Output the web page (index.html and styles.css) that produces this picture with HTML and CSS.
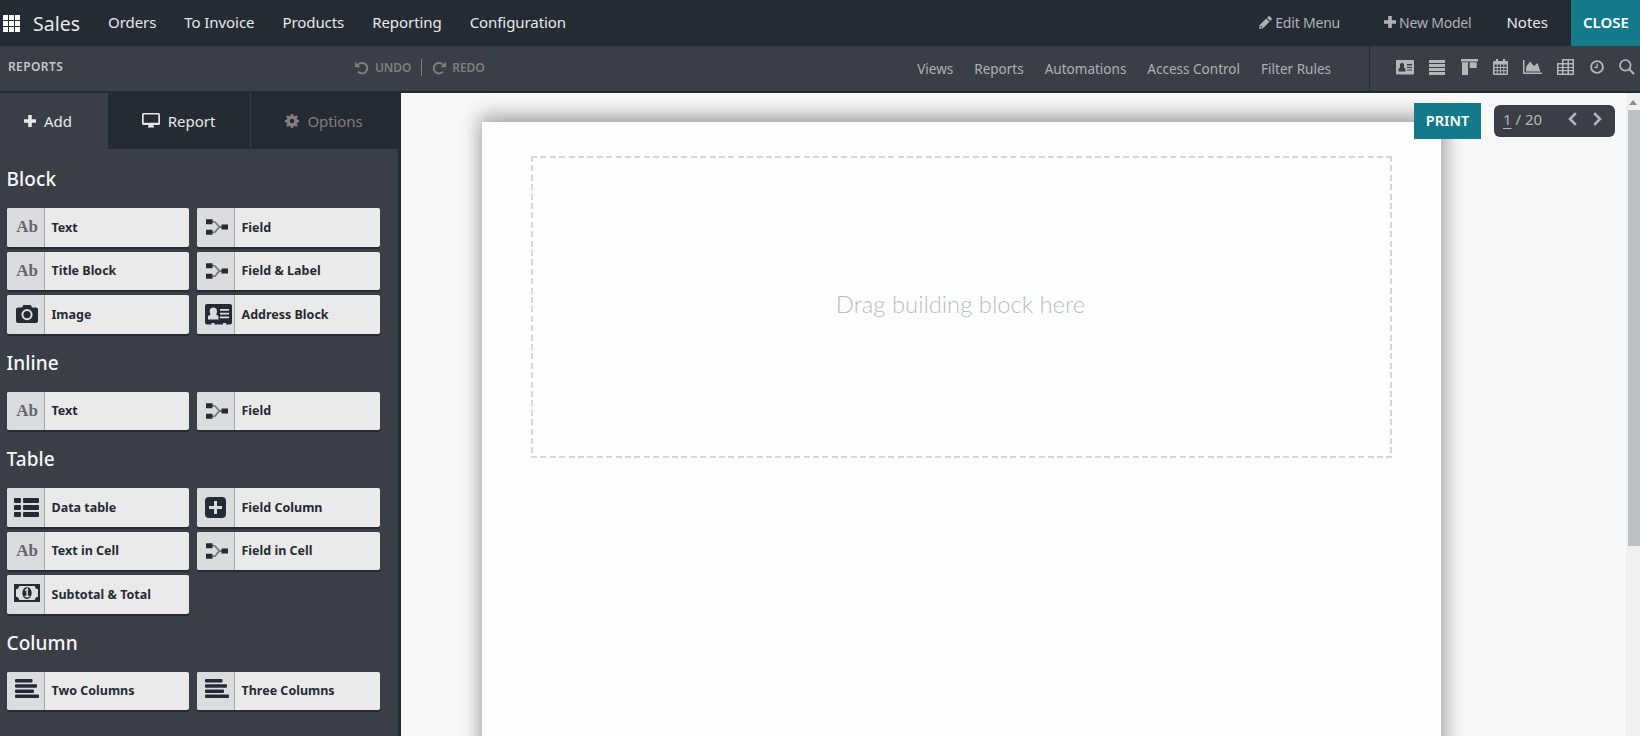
FILE: index.html
```
<!DOCTYPE html>
<html lang="en">
<head>
<meta charset="utf-8">
<title>Sales - Reports</title>
<link rel="stylesheet" href="styles.css">
</head>
<body>
<svg class="defs" width="0" height="0" aria-hidden="true">
  <symbol id="field" viewBox="0 0 22 16">
    <path d="M4 2.700h3.500C11 2.700 11 8 14.500 8H17M4 13.300h3.500C11 13.300 11 8 14.500 8" fill="none" stroke="#777b80" stroke-width="1.800"/>
    <path d="M0 .2h6.500v5H0zM0 10.800h6.500v5H0zM15.500 5.500H22v5h-6.500z"/>
  </symbol>
  <symbol id="align" viewBox="0 0 24 19">
    <path d="M1 0h15.500a1 1 0 0 1 1 1v1.500a1 1 0 0 1-1 1H1a1 1 0 0 1-1-1V1a1 1 0 0 1 1-1zM1 5.200h20a1 1 0 0 1 1 1v1.500a1 1 0 0 1-1 1H1a1 1 0 0 1-1-1v-1.500a1 1 0 0 1 1-1zM1 10.400h17a1 1 0 0 1 1 1v1.500a1 1 0 0 1-1 1H1a1 1 0 0 1-1-1v-1.500a1 1 0 0 1 1-1zM1 15.500h22a1 1 0 0 1 1 1V18a1 1 0 0 1-1 1H1a1 1 0 0 1-1-1v-1.500a1 1 0 0 1 1-1z"/>
  </symbol>
  <symbol id="undo" viewBox="0 0 14 14">
    <path d="M2.600 4.200A5.300 5.300 0 1 1 3 10.700" fill="none" stroke="currentColor" stroke-width="2"/>
    <path d="M0 .8v5.400h5.400z"/>
  </symbol>
  <symbol id="plus" viewBox="0 0 12 12">
    <path d="M4.200 0h3.600v4.200H12v3.600H7.800V12H4.200V7.800H0V4.200h4.200z"/>
  </symbol>
</svg>

<header class="topbar">
  <svg class="apps" viewBox="0 0 17 17"><path d="M0 0h5v5H0zM6 0h5v5H6zM12 0h5v5h-5zM0 6h5v5H0zM6 6h5v5H6zM12 6h5v5h-5zM0 12h5v5H0zM6 12h5v5H6zM12 12h5v5h-5z"/></svg>
  <span class="brand">Sales</span>
  <nav class="menu"><a>Orders</a><a>To Invoice</a><a>Products</a><a>Reporting</a><a>Configuration</a></nav>
  <div class="actions">
    <a class="muted edit"><svg width="13" height="13" viewBox="0 0 13 13"><path d="M9.300.500a1.200 1.200 0 0 1 1.700 0L12.500 2a1.200 1.200 0 0 1 0 1.700l-1.300 1.300L8 1.800zM7.300 2.500l3.200 3.200-6.600 6.600L0 13l.7-3.900zM1.800 9.600l-.3 1.900 1.900-.4z" fill-rule="evenodd"/></svg>Edit Menu</a>
    <a class="muted model"><svg width="12" height="12"><use href="#plus"/></svg>New Model</a>
    <a class="notes">Notes</a>
    <button class="close">CLOSE</button>
  </div>
</header>

<div class="subbar">
  <span class="crumb">REPORTS</span>
  <div class="history">
    <span><svg width="14" height="14"><use href="#undo"/></svg>UNDO</span>
    <i></i>
    <span><svg class="flip" width="14" height="14"><use href="#undo"/></svg>REDO</span>
  </div>
  <nav class="links"><a>Views</a><a>Reports</a><a>Automations</a><a>Access Control</a><a>Filter Rules</a></nav>
  <div class="views">
    <svg width="18" height="15" viewBox="0 0 18 15"><path fill-rule="evenodd" d="M1 0h16a1 1 0 0 1 1 1v12.500a1 1 0 0 1-1 1H1a1 1 0 0 1-1-1V1a1 1 0 0 1 1-1zM2.500 11.500h7V9L8 7.500V4L6 2.500 4 4v3.500L2.500 9zM11 4v1.500h5V4zM11 7v1h5V7zM11 9.500v1h5v-1z"/></svg>
    <svg width="16" height="15" viewBox="0 0 16 15"><path d="M0 0h16v3H0zM0 4h16v3H0zM0 8h16v3H0zM0 12h16v3H0z"/></svg>
    <svg width="17" height="16" viewBox="0 0 17 16"><path d="M0 0h17v2.500H0zM1 3.300h6V16H1zM8.700 3.300h7V9h-7z"/></svg>
    <svg width="15" height="16" viewBox="0 0 15 16"><path fill-rule="evenodd" d="M1 2h2V0h2v2h5V0h2v2h2a1 1 0 0 1 1 1v12a1 1 0 0 1-1 1H1a1 1 0 0 1-1-1V3a1 1 0 0 1 1-1zM1.500 5.500V8h2.300V5.500zm3.300 0V8h2.300V5.500zm3.200 0V8h2.300V5.500zm3.300 0V8h2.300V5.500zM1.500 9v2.300h2.300V9zm3.300 0v2.300h2.300V9zM8 9v2.300h2.300V9zm3.300 0v2.300h2.300V9zM1.500 12.300v2.200h2.300v-2.200zm3.300 0v2.200h2.300v-2.200zm3.200 0v2.200h2.300v-2.200zm3.300 0v2.200h2.300v-2.200z"/></svg>
    <svg width="19" height="14" viewBox="0 0 19 14"><path d="M0 0h1.500v12.500H19V14H0zM3 11.500V7l4-5.500L11 6l3.500-3L17.500 11.500z"/></svg>
    <svg width="17" height="16" viewBox="0 0 17 16"><path fill-rule="evenodd" d="M5 0h12v16H0V4h5zM6.500 1.500V4h4V1.500zm5.500 0V4h3.500V1.500zM1.500 5.500V8H5V5.500zm5 0V8h4V5.500zm5.500 0V8h3.500V5.500zM1.500 9v2H5V9zm5 0v2h4V9zM12 9v2h3.500V9zM1.500 12.200v2.300H5v-2.300zm5 0v2.300h4v-2.300zm5.500 0v2.300h3.500v-2.300z"/></svg>
    <svg width="14" height="14" viewBox="0 0 14 14"><path d="M7 3.500v4H4.500" fill="none" stroke="currentColor" stroke-width="1.300"/><circle cx="7" cy="7" r="5.900" fill="none" stroke="currentColor" stroke-width="1.900"/></svg>
    <svg width="16" height="16" viewBox="0 0 16 16"><circle cx="6.300" cy="6.300" r="5.300" fill="none" stroke="currentColor" stroke-width="1.700"/><path d="M10.200 10.200l4.800 4.800" stroke="currentColor" stroke-width="2.100"/></svg>
  </div>
</div>

<main class="work">
  <aside class="side">
    <div class="tabs">
      <div class="tab active"><svg width="12" height="12"><use href="#plus"/></svg>Add</div>
      <div class="tab report"><svg width="18" height="15" viewBox="0 0 18 15"><path fill-rule="evenodd" d="M1.500 0h15A1.500 1.500 0 0 1 18 1.500v9a1.500 1.500 0 0 1-1.500 1.500H11l1 1.500v1H6v-1L7 12H1.500A1.500 1.500 0 0 1 0 10.500v-9A1.500 1.500 0 0 1 1.500 0zm.2 1.500v8.300h14.600V1.500z"/></svg>Report</div>
      <div class="tab options"><svg width="14" height="14" viewBox="0 0 14 14"><path fill-rule="evenodd" d="M5.900 0h2.200l.4 1.900 1.100.5 1.700-1.100 1.500 1.500-1.100 1.700.5 1.100 1.800.4v2.200l-1.800.4-.5 1.100 1.100 1.700-1.500 1.500-1.700-1.100-1.100.5L8.100 14H5.900l-.4-1.700-1.100-.5-1.700 1.100-1.500-1.500 1.100-1.700-.5-1.100L0 8.200V6l1.800-.4.500-1.100-1.100-1.700 1.500-1.500 1.700 1.100 1.100-.5zM7 4.700a2.300 2.300 0 1 0 0 4.600 2.300 2.300 0 0 0 0-4.600z"/></svg>Options</div>
    </div>
    <div class="blocks">
      <section>
        <h3>Block</h3>
        <div class="grid">
          <div class="item"><b class="ab">Ab</b><span>Text</span></div>
          <div class="item"><b><svg width="22" height="16"><use href="#field"/></svg></b><span>Field</span></div>
          <div class="item"><b class="ab">Ab</b><span>Title Block</span></div>
          <div class="item"><b><svg width="22" height="16"><use href="#field"/></svg></b><span>Field &amp; Label</span></div>
          <div class="item"><b><svg width="22" height="18" viewBox="0 0 22 18"><path fill-rule="evenodd" d="M2 2.500h4L7.300 0h7.400L16 2.500h4a2 2 0 0 1 2 2V16a2 2 0 0 1-2 2H2a2 2 0 0 1-2-2V4.500a2 2 0 0 1 2-2zM11 4a5.600 5.600 0 1 0 0 11.200A5.600 5.600 0 0 0 11 4zm0 2a3.600 3.600 0 1 1 0 7.200A3.600 3.600 0 0 1 11 6z"/></svg></b><span>Image</span></div>
          <div class="item"><b class="card"><svg width="27" height="21" viewBox="0 0 27 21"><path fill-rule="evenodd" d="M2 0h23a2 2 0 0 1 2 2v16.500a2 2 0 0 1-2 2h-4V19h-3v1.500H9.500V19h-3v1.500H2a2 2 0 0 1-2-2V2a2 2 0 0 1 2-2zM3 15.500h10.500v-3.300L11 10.300c1-1.300 1-2.300 1-3.300C12 5 10.500 3.500 8.300 3.500S4.700 5 4.700 7c0 1 0 2 1 3.300L3 12.200zM15 5v1.700h9V5zm0 3.800v1.700h9V8.800zm0 3.800v1.700h9v-1.700z"/></svg></b><span>Address Block</span></div>
        </div>
      </section>
      <section>
        <h3>Inline</h3>
        <div class="grid">
          <div class="item"><b class="ab">Ab</b><span>Text</span></div>
          <div class="item"><b><svg width="22" height="16"><use href="#field"/></svg></b><span>Field</span></div>
        </div>
      </section>
      <section>
        <h3>Table</h3>
        <div class="grid">
          <div class="item"><b><svg width="25" height="19" viewBox="0 0 25 19"><path d="M1 0h5a1 1 0 0 1 1 1v3a1 1 0 0 1-1 1H1a1 1 0 0 1-1-1V1a1 1 0 0 1 1-1zM10 0h14a1 1 0 0 1 1 1v3a1 1 0 0 1-1 1H10a1 1 0 0 1-1-1V1a1 1 0 0 1 1-1zM1 7h5a1 1 0 0 1 1 1v3a1 1 0 0 1-1 1H1a1 1 0 0 1-1-1V8a1 1 0 0 1 1-1zM10 7h14a1 1 0 0 1 1 1v3a1 1 0 0 1-1 1H10a1 1 0 0 1-1-1V8a1 1 0 0 1 1-1zM1 14h5a1 1 0 0 1 1 1v3a1 1 0 0 1-1 1H1a1 1 0 0 1-1-1v-3a1 1 0 0 1 1-1zM10 14h14a1 1 0 0 1 1 1v3a1 1 0 0 1-1 1H10a1 1 0 0 1-1-1v-3a1 1 0 0 1 1-1z"/></svg></b><span>Data table</span></div>
          <div class="item"><b class="add"><svg width="21" height="21" viewBox="0 0 21 21"><path fill-rule="evenodd" d="M4 0h13a4 4 0 0 1 4 4v13a4 4 0 0 1-4 4H4a4 4 0 0 1-4-4V4a4 4 0 0 1 4-4zM9 4v5H4v3h5v5h3v-5h5V9h-5V4z"/></svg></b><span>Field Column</span></div>
          <div class="item"><b class="ab">Ab</b><span>Text in Cell</span></div>
          <div class="item"><b><svg width="22" height="16"><use href="#field"/></svg></b><span>Field in Cell</span></div>
          <div class="item"><b class="cash"><svg width="26" height="18" viewBox="0 0 26 18"><path fill-rule="evenodd" d="M0 0h26v18H0zM5.200 2A3.600 3.600 0 0 1 2 5.200v7.600A3.600 3.600 0 0 1 5.200 16h15.600a3.600 3.600 0 0 1 3.200-3.200V5.200A3.600 3.600 0 0 1 20.800 2z"/><ellipse cx="13" cy="9" rx="4.700" ry="5.900"/><path d="M11 6.500l2.200-1.500v7.200M10.700 12.500h4.800" fill="none" stroke="#dedede" stroke-width="1.500"/></svg></b><span>Subtotal &amp; Total</span></div>
        </div>
      </section>
      <section>
        <h3>Column</h3>
        <div class="grid">
          <div class="item"><b class="lift"><svg width="24" height="19"><use href="#align"/></svg></b><span>Two Columns</span></div>
          <div class="item"><b class="lift"><svg width="24" height="19"><use href="#align"/></svg></b><span>Three Columns</span></div>
        </div>
      </section>
    </div>
  </aside>

  <div class="canvas">
    <div class="paper"><div class="drop">Drag building block here</div></div>
    <div class="tools">
      <button class="print">PRINT</button>
      <div class="pager"><span><u>1</u> / 20</span>
        <svg class="prev" width="9" height="14" viewBox="0 0 9 14"><path d="M7.800 1.200L2 7l5.800 5.800" fill="none" stroke="currentColor" stroke-width="2.600"/></svg>
        <svg width="9" height="14" viewBox="0 0 9 14"><path d="M1.200 1.200L7 7l-5.800 5.800" fill="none" stroke="currentColor" stroke-width="2.600"/></svg>
      </div>
    </div>
    <div class="scroll"><svg width="8" height="5" viewBox="0 0 8 5"><path d="M4 0l4 5H0z"/></svg><div class="thumb"></div></div>
  </div>
</main>
</body>
</html>
```
FILE: styles.css
```
* { box-sizing: border-box; }
body {
  margin: 0;
  width: 1640px;
  height: 736px;
  overflow: hidden;
  display: flex;
  flex-direction: column;
  background: #252b33;
  font-family: "Noto Sans", "Open Sans", sans-serif;
  color: #e8e8e8;
}
svg { fill: currentColor; flex: none; }
.defs { position: absolute; }
button { border: 0; margin: 0; padding: 0; font: inherit; color: #fff; }
a, span { white-space: nowrap; }

.topbar { height: 46px; flex: none; display: flex; align-items: center; padding-left: 3px; background: #252b33; }
.apps { width: 17px; height: 17px; color: #fff; }
.brand { margin-left: 13px; width: 75px; font-size: 19.500px; }
.menu { display: flex; gap: 28px; font-size: 15px; letter-spacing: -.07px; padding-bottom: 3px; }
.actions { margin-left: auto; display: flex; align-items: center; height: 46px; font-size: 15px; }
.actions a { padding-bottom: 3px; }
.actions .muted { display: flex; align-items: center; gap: 3px; padding-bottom: 2px; font-size: 14px; letter-spacing: -.2px; color: #b0b2b5; }
.edit { margin-right: 44px; }
.model { margin-right: 35px; }
.notes { margin-right: 23px; }
.close { width: 69px; height: 46px; padding: 0 0 3px 1px; background: #147a89; font-size: 15px; font-weight: 600; }

.subbar { height: 47px; flex: none; display: flex; align-items: center; background: #3a3f46; border-bottom: 2px solid #252b33; }
.crumb { width: 347px; padding: 0 0 5px 8px; font-size: 12px; letter-spacing: .4px; font-weight: 600; color: #c4c6c8; }
.history { display: flex; align-items: center; margin-left: 8px; padding-bottom: 2px; font-size: 12px; font-weight: 600; color: #837d7d; }
.history span { display: flex; align-items: center; gap: 6px; letter-spacing: -.1px; }
.history i { width: 1px; height: 17px; margin: 0 10px; background: #837d7d; }
.flip { transform: scaleX(-1); }
.links { margin-left: auto; display: flex; gap: 21px; padding-right: 38px; font-size: 13.500px; letter-spacing: .01px; color: #aeb0b3; }
.views { width: 271px; height: 45px; padding: 0 5px 3px 26px; display: flex; align-items: center; justify-content: space-between; border-left: 1px solid #252b33; color: #b4b6b8; }

.work { flex: 1; display: flex; min-height: 0; }
.side { width: 401px; flex: none; background: #3a3f46; border-right: 3px solid #252b33; }
.tabs { height: 56px; display: flex; font-size: 15px; }
.tab { display: flex; align-items: center; justify-content: center; gap: 8px; padding-bottom: 1px; background: #252b33; color: #e8e8e8; }
.active { width: 108px; background: #3a3f46; padding-right: 12px; }
.report { width: 143px; padding-right: 1px; border-right: 1px solid #3a3f46; }
.options { flex: 1; color: #837d7d; padding-right: 1px; letter-spacing: -.1px; }
.blocks { padding: 15px 0 0 6.500px; display: flex; flex-direction: column; gap: 14px; }
h3 { margin: 0 0 14px; font-size: 19px; font-weight: 500; line-height: 30px; letter-spacing: .1px; color: #f8f8f8; }
.grid { display: grid; grid-template-columns: 182.500px 183.500px; gap: 5px 7.500px; }
.item { height: 38.500px; display: flex; align-items: center; border-radius: 2px; overflow: hidden; background: #eaeaea; box-shadow: 0 2px 0 #252b33; color: #252b33; font-size: 12.500px; font-weight: 700; }
.item b { width: 38px; height: 100%; display: flex; align-items: center; justify-content: center; padding-left: 3px; background: #dbdcdd; border-right: 1px solid #a4a8ab; }
.item span { padding-left: 7px; }
.item .ab { font: 700 17px "Liberation Serif", serif; color: #62666b; padding-left: 4px; }
.item .card { padding-left: 6px; }
.item .add { padding-left: 0; }
.item .lift { padding-bottom: 4px; }
.item .cash { padding: 0 0 2px 4px; }

.canvas { position: relative; flex: 1; display: flex; background: #f8f8f9; overflow: hidden; }
.paper { width: 959px; height: 720px; margin: 29px 0 0 80.500px; padding: 34px 49px 0 49px; background: #fdfefe; box-shadow: 1px -3px 18px 3px rgba(20, 25, 30, .4); }
.drop {
  height: 302px;
  padding: 0 1px 6px 0;
  display: flex;
  align-items: center;
  justify-content: center;
  font: 300 23.800px Lato, sans-serif;
  color: #bcbdbf;
  background:
    repeating-linear-gradient(90deg, #d6d7d9 0 6px, transparent 6px 9.400px) top / 100% 2px no-repeat,
    repeating-linear-gradient(90deg, #d6d7d9 0 6px, transparent 6px 9.400px) bottom / 100% 2px no-repeat,
    repeating-linear-gradient(180deg, #d6d7d9 0 6px, transparent 6px 9.400px) left / 2px 100% no-repeat,
    repeating-linear-gradient(180deg, #d6d7d9 0 6px, transparent 6px 9.400px) right / 2px 100% no-repeat;
}
.tools { position: absolute; top: 10px; right: 25px; display: flex; align-items: center; gap: 13px; }
.print { width: 67px; height: 36px; padding-bottom: 2px; background: #147a89; font-size: 14.500px; font-weight: 600; }
.pager { width: 121px; height: 32px; display: flex; align-items: center; padding: 0 13px 4px 9px; border-radius: 6px; background: #3a3f46; color: #b4b6b8; font-size: 15px; }
.pager u { text-underline-offset: 3px; }
.prev { margin: 0 16px 0 auto; }
.scroll { margin-left: auto; width: 14px; display: flex; flex-direction: column; align-items: flex-end; background: #f1f0f0; color: #8b8e91; }
.scroll svg { margin: 7px 3px 5px 0; }
.thumb { width: 12px; height: 436px; background: #bec1c3; }
```
